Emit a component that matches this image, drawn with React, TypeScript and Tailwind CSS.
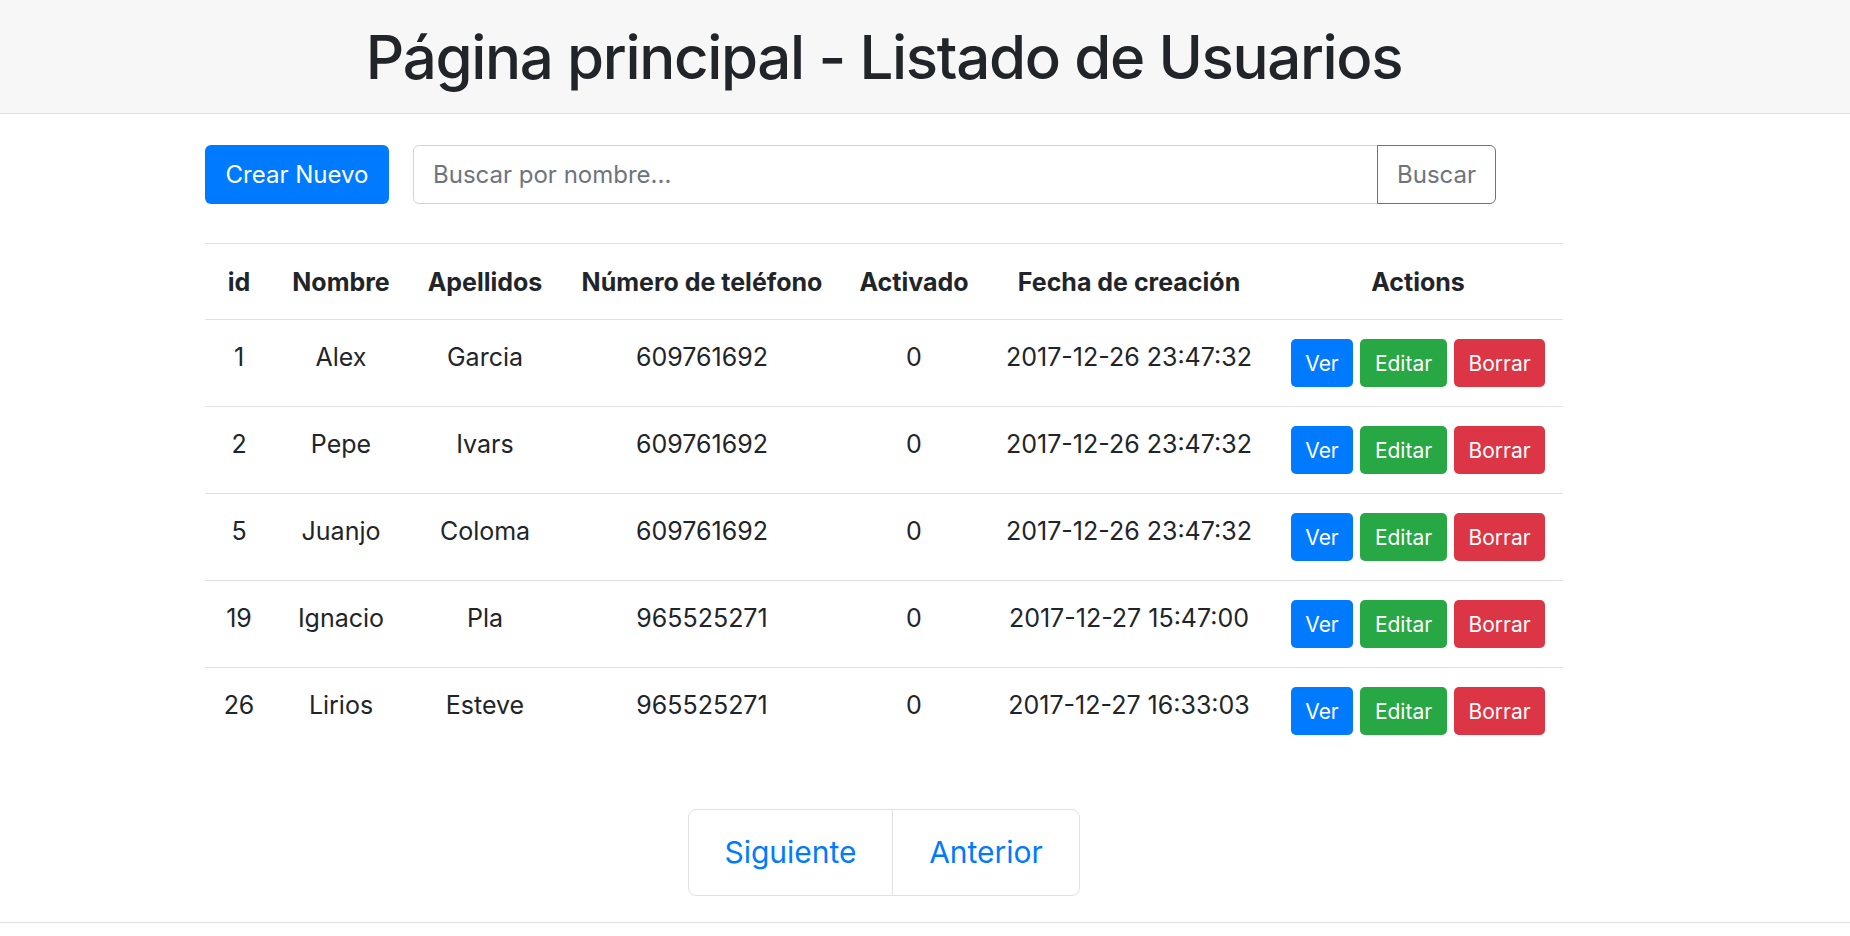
import React from "react";

const rows = [
  { id: 1, nombre: "Alex", apellidos: "Garcia", tel: "609761692", act: 0, fecha: "2017-12-26 23:47:32" },
  { id: 2, nombre: "Pepe", apellidos: "Ivars", tel: "609761692", act: 0, fecha: "2017-12-26 23:47:32" },
  { id: 5, nombre: "Juanjo", apellidos: "Coloma", tel: "609761692", act: 0, fecha: "2017-12-26 23:47:32" },
  { id: 19, nombre: "Ignacio", apellidos: "Pla", tel: "965525271", act: 0, fecha: "2017-12-27 15:47:00" },
  { id: 26, nombre: "Lirios", apellidos: "Esteve", tel: "965525271", act: 0, fecha: "2017-12-27 16:33:03" },
];

const headers = ["id", "Nombre", "Apellidos", "Número de teléfono", "Activado", "Fecha de creación", "Actions"];
const widths = ["w-[68px]", "w-[136px]", "w-[152px]", "w-[282px]", "w-[142px]", "w-[288px]", "w-[290px]"];

export default function App() {
  return (
    <div className="min-h-screen bg-white font-['Inter','Liberation_Sans',sans-serif] text-[#212529]">
      <header className="h-[114px] bg-[#f7f7f7] border-b border-[#dedede] flex">
        <div className="ml-[205px] w-[1358px] flex items-center justify-center">
          <h1 className="text-[60px] font-medium leading-none tracking-[-1.35px]">Página principal - Listado de Usuarios</h1>
        </div>
      </header>

      <main className="ml-[205px] w-[1358px] pt-[31px]">
        <div className="flex h-[59px]">
          <button className="w-[184px] h-[59px] rounded-[6px] bg-[#007bff] text-white text-[24px] leading-none">
            Crear Nuevo
          </button>
          <div className="ml-[24px] flex">
            <input
              className="w-[965px] h-[59px] rounded-l-[6px] border border-[#ced4da] px-[19px] text-[24px] placeholder:text-[#6c757d] outline-none"
              placeholder="Buscar por nombre..."
            />
            <button className="-ml-px w-[119px] h-[59px] rounded-r-[6px] border border-[#6c757d] text-[#6c757d] text-[24px] leading-none">
              Buscar
            </button>
          </div>
        </div>

        <table className="mt-[39px] w-[1358px] table-fixed border-collapse border-t border-[#dee2e6] text-[25px]">
          <colgroup>
            {widths.map((w, i) => (
              <col key={i} className={w} />
            ))}
          </colgroup>
          <thead>
            <tr className="border-b border-[#dee2e6]">
              {headers.map((h) => (
                <th key={h} className="h-[76px] align-top pt-[22px] leading-[33px] font-bold text-center">
                  {h}
                </th>
              ))}
            </tr>
          </thead>
          <tbody>
            {rows.map((r, i) => (
              <tr key={r.id} className={i < rows.length - 1 ? "border-b border-[#dee2e6]" : ""}>
                <td className="h-[87px] align-top pt-[21px] leading-[33px] text-center">{r.id}</td>
                <td className="align-top pt-[21px] leading-[33px] text-center">{r.nombre}</td>
                <td className="align-top pt-[21px] leading-[33px] text-center">{r.apellidos}</td>
                <td className="align-top pt-[21px] leading-[33px] text-center">{r.tel}</td>
                <td className="align-top pt-[21px] leading-[33px] text-center">{r.act}</td>
                <td className="align-top pt-[21px] leading-[33px] text-center">{r.fecha}</td>
                <td className="align-top pt-[19px]">
                  <div className="flex justify-center gap-[7px]">
                    <button className="w-[62px] h-[48px] rounded-[5px] bg-[#007bff] text-white text-[21px] leading-none">Ver</button>
                    <button className="w-[87px] h-[48px] rounded-[5px] bg-[#28a745] text-white text-[21px] leading-none">Editar</button>
                    <button className="w-[91px] h-[48px] rounded-[5px] bg-[#dc3545] text-white text-[21px] leading-none">Borrar</button>
                  </div>
                </td>
              </tr>
            ))}
          </tbody>
        </table>

        <div className="mt-[54px] flex justify-center">
          <div className="flex h-[87px] rounded-[8px] border border-[#dee2e6] text-[30px] text-[#007bff]">
            <span className="w-[204px] flex items-center justify-center border-r border-[#dee2e6]">Siguiente</span>
            <span className="w-[186px] flex items-center justify-center">Anterior</span>
          </div>
        </div>
      </main>

      <div className="mt-[26px] border-t border-[#dee2e6]" />
    </div>
  );
}
